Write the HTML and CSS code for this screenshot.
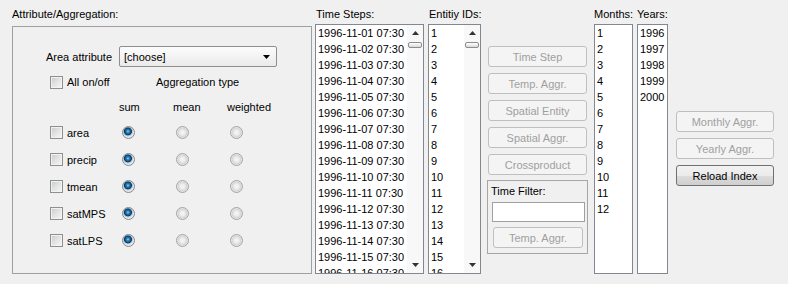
FILE: index.html
```html
<!DOCTYPE html>
<html>
<head>
<meta charset="utf-8">
<title>Aggregation</title>
<link rel="stylesheet" href="styles.css">
</head>
<body>
<div class="window">
  <div class="col col-attr">
    <div class="caption">Attribute/Aggregation:</div>
    <div class="groupbox attr-box">
      <div class="area-row">
        <span class="area-label">Area attribute</span>
        <div class="combo">
          <span>[choose]</span>
          <svg class="combo-arrow" width="7" height="4" viewBox="0 0 7 4"><polygon points="0,0 7,0 3.5,4" fill="#000"/></svg>
        </div>
      </div>
      <div class="agg-grid">
        <div class="check-cell span2"><span class="checkbox"></span><span>All on/off</span></div>
        <span class="agg-title">Aggregation type</span>

        <span></span>
        <span class="head">sum</span>
        <span class="head">mean</span>
        <span class="head">weighted</span>

        <div class="check-cell"><span class="checkbox"></span><span>area</span></div>
        <span class="radio on"></span><span class="radio"></span><span class="radio"></span>

        <div class="check-cell"><span class="checkbox"></span><span>precip</span></div>
        <span class="radio on"></span><span class="radio"></span><span class="radio"></span>

        <div class="check-cell"><span class="checkbox"></span><span>tmean</span></div>
        <span class="radio on"></span><span class="radio"></span><span class="radio"></span>

        <div class="check-cell"><span class="checkbox"></span><span>satMPS</span></div>
        <span class="radio on"></span><span class="radio"></span><span class="radio"></span>

        <div class="check-cell"><span class="checkbox"></span><span>satLPS</span></div>
        <span class="radio on"></span><span class="radio"></span><span class="radio"></span>
      </div>
    </div>
  </div>

  <div class="col col-times">
    <div class="caption indent">Time Steps:</div>
    <div class="listbox">
      <div class="items">
        <div>1996-11-01 07:30</div>
        <div>1996-11-02 07:30</div>
        <div>1996-11-03 07:30</div>
        <div>1996-11-04 07:30</div>
        <div>1996-11-05 07:30</div>
        <div>1996-11-06 07:30</div>
        <div>1996-11-07 07:30</div>
        <div>1996-11-08 07:30</div>
        <div>1996-11-09 07:30</div>
        <div>1996-11-10 07:30</div>
        <div>1996-11-11 07:30</div>
        <div>1996-11-12 07:30</div>
        <div>1996-11-13 07:30</div>
        <div>1996-11-14 07:30</div>
        <div>1996-11-15 07:30</div>
        <div>1996-11-16 07:30</div>
      </div>
      <div class="scrollbar">
        <div class="sb-btn"><svg width="7" height="4" viewBox="0 0 7 4"><polygon points="0,4 7,4 3.5,0" fill="#333"/></svg></div>
        <div class="thumb"></div>
        <div class="sb-track"></div>
        <div class="sb-btn"><svg width="7" height="4" viewBox="0 0 7 4"><polygon points="0,0 7,0 3.5,4" fill="#333"/></svg></div>
      </div>
    </div>
  </div>

  <div class="col col-ids">
    <div class="caption indent">Entitiy IDs:</div>
    <div class="listbox">
      <div class="items">
        <div>1</div><div>2</div><div>3</div><div>4</div>
        <div>5</div><div>6</div><div>7</div><div>8</div>
        <div>9</div><div>10</div><div>11</div><div>12</div>
        <div>13</div><div>14</div><div>15</div><div>16</div>
      </div>
      <div class="scrollbar">
        <div class="sb-btn"><svg width="7" height="4" viewBox="0 0 7 4"><polygon points="0,4 7,4 3.5,0" fill="#333"/></svg></div>
        <div class="thumb"></div>
        <div class="sb-track"></div>
        <div class="sb-btn"><svg width="7" height="4" viewBox="0 0 7 4"><polygon points="0,0 7,0 3.5,4" fill="#333"/></svg></div>
      </div>
    </div>
  </div>

  <div class="col col-buttons">
    <div class="btn">Time Step</div>
    <div class="btn">Temp. Aggr.</div>
    <div class="btn">Spatial Entity</div>
    <div class="btn">Spatial Aggr.</div>
    <div class="btn">Crossproduct</div>
    <div class="filter-group">
      <div class="filter-label">Time Filter:</div>
      <div class="text-input"></div>
      <div class="btn filter-btn">Temp. Aggr.</div>
    </div>
  </div>

  <div class="col col-months">
    <div class="caption">Months:</div>
    <div class="listbox">
      <div class="items">
        <div>1</div><div>2</div><div>3</div><div>4</div>
        <div>5</div><div>6</div><div>7</div><div>8</div>
        <div>9</div><div>10</div><div>11</div><div>12</div>
      </div>
    </div>
  </div>

  <div class="col col-years">
    <div class="caption">Years:</div>
    <div class="listbox">
      <div class="items">
        <div>1996</div><div>1997</div><div>1998</div><div>1999</div><div>2000</div>
      </div>
    </div>
  </div>

  <div class="col col-right">
    <div class="btn">Monthly Aggr.</div>
    <div class="btn">Yearly Aggr.</div>
    <div class="btn enabled">Reload Index</div>
  </div>
</div>
</body>
</html>
```

FILE: styles.css
```css
html, body {
  margin: 0;
  padding: 0;
}

body {
  background: #f0f0f0;
  font-family: "Liberation Sans", Arial, sans-serif;
  font-size: 11px;
  color: #000;
}

.window {
  display: flex;
  align-items: flex-start;
  width: 788px;
  height: 284px;
  padding-left: 12px;
  box-sizing: border-box;
  overflow: hidden;
}

.col {
  flex: none;
}

.caption {
  height: 14px;
  line-height: 14px;
  margin-top: 7px;
  white-space: nowrap;
}

.caption.indent {
  padding-left: 1px;
}

/* Attribute / Aggregation group */
.col-attr {
  width: 300px;
}

.attr-box {
  margin-top: 5px;
  height: 248px;
  box-sizing: border-box;
  border: 1px solid #a0a0a0;
  padding-top: 19px;
}

.area-row {
  display: flex;
  align-items: center;
  height: 21px;
  padding-left: 33px;
}

.area-label {
  width: 73px;
  white-space: nowrap;
}

.combo {
  width: 158px;
  height: 21px;
  box-sizing: border-box;
  border: 1px solid #8e8e8e;
  border-radius: 2px;
  background: linear-gradient(#fcfcfc, #eaeaea);
  display: flex;
  align-items: center;
  justify-content: space-between;
  padding: 0 6px 0 4px;
}

.combo-arrow {
  display: block;
}

.agg-grid {
  display: grid;
  grid-template-columns: 52px 54px 54px 54px;
  grid-template-rows: 24px 25px repeat(5, 27px);
  align-items: center;
  margin: 3px 0 0 37px;
}

.check-cell {
  display: flex;
  align-items: center;
  gap: 4px;
  white-space: nowrap;
}

.span2 {
  grid-column: 1 / span 2;
}

.agg-title {
  grid-column: 3 / span 2;
  white-space: nowrap;
}

.head {
  padding-left: 17px;
  white-space: nowrap;
}

.checkbox {
  flex: none;
  width: 13px;
  height: 13px;
  box-sizing: border-box;
  border: 1px solid #8e8f8f;
  background: linear-gradient(135deg, #c6c9cc 0%, #e2e3e4 50%, #f7f7f7 100%);
  box-shadow: inset 0 0 0 1px #f2f2f2;
}

.radio {
  display: block;
  margin-left: 20px;
  width: 13px;
  height: 13px;
  box-sizing: border-box;
  border-radius: 50%;
  border: 1px solid #a3a3a3;
  background: radial-gradient(circle at 50% 50%, #f6f6f6 0, #ececec 2.5px, #d4d4d4 4.5px, #eeeeee 5.5px);
}

.radio.on {
  border-color: #7f8b95;
  background: radial-gradient(circle at 45% 40%, #9ad6f6 0, #2f8bc4 1.3px, #165a8c 2.6px, #0d3a5e 3.6px, #aebfcd 4.3px, #e6e9eb 5.5px);
}

/* List boxes */
.col-times {
  width: 109px;
  margin-left: 3px;
}

.col-ids {
  width: 53px;
  margin-left: 4px;
}

.col-months {
  width: 39px;
  margin-left: 6px;
}

.col-years {
  width: 31px;
  margin-left: 4px;
}

.listbox {
  margin-top: 3px;
  height: 250px;
  box-sizing: border-box;
  border: 1px solid #828790;
  background: #fff;
  display: flex;
  overflow: hidden;
}

.items {
  flex: 1;
  min-width: 0;
  padding-left: 2px;
  line-height: 16px;
  white-space: nowrap;
  overflow: hidden;
}

.scrollbar {
  flex: none;
  width: 16px;
  display: flex;
  flex-direction: column;
  align-items: center;
  background: #f8f8f8;
}

.sb-btn {
  height: 16px;
  width: 16px;
  display: flex;
  align-items: center;
  justify-content: center;
}

.sb-btn svg {
  display: block;
}

.thumb {
  width: 14px;
  height: 6px;
  margin-top: 1px;
  box-sizing: border-box;
  border: 1px solid #8c8c8c;
  border-radius: 2px;
  background: linear-gradient(#ffffff, #d9d9d9);
}

.sb-track {
  flex: 1;
}

/* Buttons */
.btn {
  height: 21px;
  box-sizing: border-box;
  border: 1px solid #bfbfbf;
  border-radius: 3px;
  background: #f4f4f4;
  color: #a0a0a0;
  display: flex;
  align-items: center;
  justify-content: center;
  white-space: nowrap;
}

.btn + .btn {
  margin-top: 6px;
}

.btn.enabled {
  border-color: #707070;
  background: linear-gradient(#f2f2f2 0%, #ebebeb 50%, #dddddd 51%, #cfcfcf 100%);
  color: #000;
}

.col-buttons {
  width: 101px;
  margin-left: 6px;
  padding-top: 46px;
  display: flex;
  flex-direction: column;
}

.col-buttons > .btn {
  margin-left: 1px;
  margin-right: 1px;
}

.filter-group {
  margin-top: 5px;
  height: 74px;
  box-sizing: border-box;
  border: 1px solid #a6a6a6;
  padding: 3px 0 0 3px;
}

.filter-label {
  height: 14px;
  line-height: 14px;
  white-space: nowrap;
}

.text-input {
  margin: 4px 0 0 1px;
  width: 93px;
  height: 20px;
  box-sizing: border-box;
  border: 1px solid #a0a0a0;
  background: #fff;
}

.filter-btn {
  margin: 5px 0 0 2px;
  width: 90px;
}

.col-right {
  width: 98px;
  margin-left: 8px;
  padding-top: 111px;
  display: flex;
  flex-direction: column;
}
```
